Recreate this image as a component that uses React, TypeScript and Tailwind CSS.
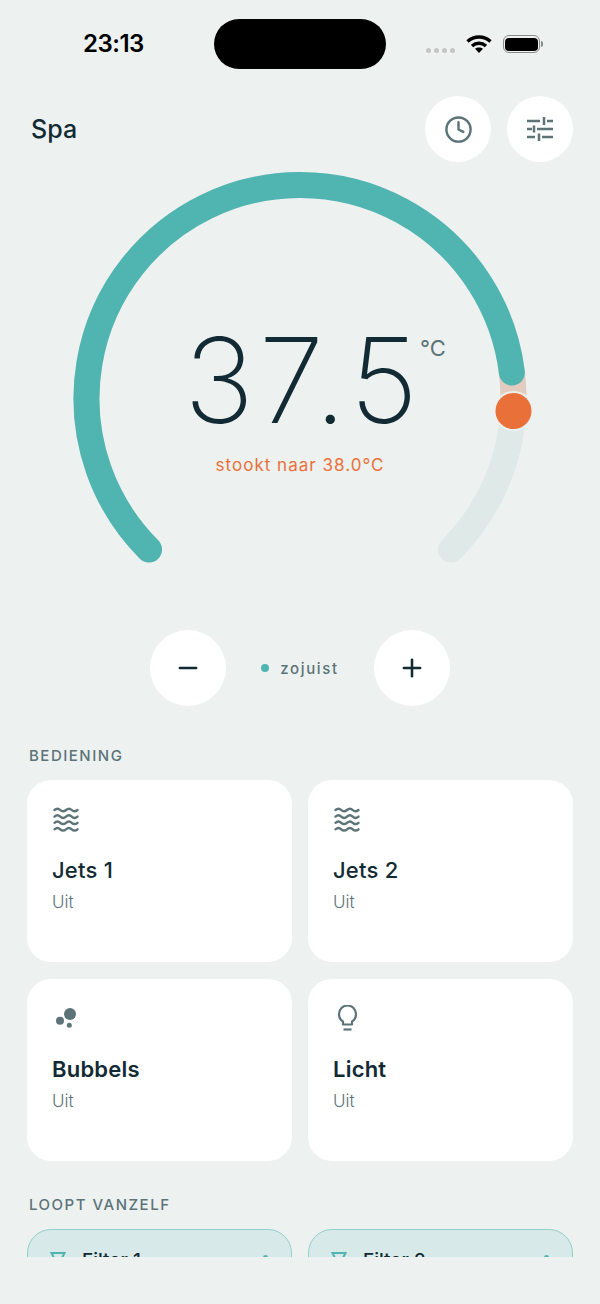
import { Clock, Minus, Plus } from 'lucide-react';

const CX = 300;
const CY = 398.5;
const R = 213.5;

// angles in degrees, clockwise from the top of the dial
const point = (deg: number) => {
  const rad = (deg * Math.PI) / 180;
  return { x: CX + R * Math.sin(rad), y: CY - R * Math.cos(rad) };
};

const arc = (from: number, to: number) => {
  const a = point(from);
  const b = point(to);
  const large = to - from > 180 ? 1 : 0;
  return `M ${a.x} ${a.y} A ${R} ${R} 0 ${large} 1 ${b.x} ${b.y}`;
};

function Gauge() {
  return (
    <div className="relative h-[440px] w-[600px]">
      <svg width="600" height="440" viewBox="0 170 600 440" className="block">
        <path d={arc(-135, 135)} fill="none" stroke="#dfe9e7" strokeWidth="26" strokeLinecap="round" />
        <path d={arc(82, 93)} fill="none" stroke="#e2ccbf" strokeWidth="26" />
        <path d={arc(-135, 83)} fill="none" stroke="#50b4b0" strokeWidth="26" strokeLinecap="round" />
        <circle cx="513.5" cy="411" r="20" fill="#edf1f0" />
        <circle cx="513.5" cy="411" r="18" fill="#ea7039" />
      </svg>
      <div className="absolute left-[184px] top-[135px] text-[118px] leading-[150px] font-[250] tracking-[0.04em] text-[#122a33]">
        37.5
      </div>
      <div className="absolute left-[420px] top-[164px] text-[22px] leading-[28px] text-[#5c7378]">°C</div>
      <div className="absolute inset-x-0 top-[283px] text-center text-[17px] leading-6 tracking-[0.06em] text-[#ea7039]">
        stookt naar 38.0°C
      </div>
    </div>
  );
}

function SlidersIcon() {
  return (
    <svg width="28" height="28" viewBox="0 0 28 28" fill="none" stroke="#5c7378" strokeWidth="2.5">
      <path d="M1 6h13M21 6h6M18 2v8" />
      <path d="M1 14h5M11 14h16M8 10.5v7" />
      <path d="M1 22h8M16 22h11M13 18.5v7.5" />
    </svg>
  );
}

function WavesIcon() {
  return (
    <svg width="28" height="28" viewBox="0 0 28 28" fill="none" stroke="#5c7378" strokeWidth="2.4" strokeLinecap="round">
      <path d="M2.5 4q3-2.6 5.75 0t5.75 0t5.75 0t5.75 0" />
      <path d="M2.5 10.6q3-2.6 5.75 0t5.75 0t5.75 0t5.75 0" />
      <path d="M2.5 16.8q3-2.6 5.75 0t5.75 0t5.75 0t5.75 0" />
      <path d="M2.5 23.3q3-2.6 5.75 0t5.75 0t5.75 0t5.75 0" />
    </svg>
  );
}

function BubblesIcon() {
  return (
    <svg width="28" height="28" viewBox="0 0 28 28" fill="#5c7378">
      <circle cx="18" cy="9" r="6" />
      <circle cx="8" cy="15.7" r="4" />
      <circle cx="17.3" cy="20.3" r="2.5" />
    </svg>
  );
}

function BulbIcon() {
  return (
    <svg width="28" height="28" viewBox="0 0 28 28" fill="none" stroke="#5c7378" strokeWidth="2.2" className="ml-[1px]">
      <path d="M9 19.5V16.5C6.5 15 5 12 5 9A8.5 8.5 0 0 1 22 9C22 12 20.5 15 18 16.5V19.5Z" strokeLinejoin="round" />
      <path d="M9.5 24.5H17.5" />
    </svg>
  );
}

function Card({ name, icon, bold }: { name: string; icon: React.ReactNode; bold?: boolean }) {
  return (
    <div className="h-[182px] rounded-[24px] bg-white pl-[25px] pt-[26px]">
      <div className="h-[28px]">{icon}</div>
      <div className={`mt-[22px] text-[22px] leading-[28px] tracking-[0.01em] text-[#122a33] ${bold ? 'font-semibold' : 'font-medium'}`}>
        {name}
      </div>
      <div className="mt-[6px] text-[17px] leading-6 font-light text-[#5c7378]">Uit</div>
    </div>
  );
}

function FilterCard({ name }: { name: string }) {
  return (
    <div className="relative h-[90px] rounded-[24px] border-[1.5px] border-[#94d0cb] bg-[#d7e9e9]">
      <svg width="16" height="16" viewBox="0 0 16 16" className="absolute left-[22px] top-[21px]" fill="none" stroke="#50b4b0" strokeWidth="2">
        <path d="M1.5 2h13L8 15z" />
      </svg>
      <span className="absolute left-[54px] top-[19px] text-[19px] leading-6 font-medium text-[#122a33]">{name}</span>
      <span className="absolute right-[23px] top-[25px] h-[5px] w-[5px] rounded-full bg-[#50b4b0]" />
    </div>
  );
}

export default function App() {
  return (
    <div className="h-[1304px] w-[600px] bg-[#edf1f0] font-['Inter',sans-serif]">
      <div className="h-[1257px] overflow-hidden">
        {/* status bar */}
        <div className="relative flex h-[88px] items-start">
          <div className="ml-[83px] mt-[29px] text-[24px] leading-[30px] font-semibold tracking-[-0.02em] text-black">23:13</div>
          <div className="absolute left-[214px] top-[19px] h-[50px] w-[172px] rounded-[25px] bg-black" />
          <div className="absolute left-[426px] top-[48px] flex gap-[3px]">
            <span className="h-[5px] w-[5px] rounded-full bg-[#c4c6c6]" />
            <span className="h-[5px] w-[5px] rounded-full bg-[#c4c6c6]" />
            <span className="h-[5px] w-[5px] rounded-full bg-[#c4c6c6]" />
            <span className="h-[5px] w-[5px] rounded-full bg-[#c4c6c6]" />
          </div>
          <svg width="26" height="20" viewBox="0 0 26 20" className="absolute left-[466px] top-[34px]" fill="none" stroke="#000" strokeWidth="3.4">
            <path d="M1.5 7.5C8 1.5 18 1.5 24.5 7.5" />
            <path d="M6 12c4-3.6 10-3.6 14 0" />
            <path d="M13 19l-4-4.2c2.2-1.8 5.8-1.8 8 0z" fill="#000" stroke="none" />
          </svg>
          <div className="absolute left-[503px] top-[35px] flex h-[18px] w-[37px] items-center justify-center rounded-[6px] border border-[#8a8a8a]">
            <span className="h-[13px] w-[33px] rounded-[4px] bg-black" />
          </div>
          <span className="absolute left-[541px] top-[41px] h-[6px] w-[2px] rounded-r-sm bg-[#8a8a8a]" />
        </div>

        {/* header */}
        <div className="flex h-[82px] items-center justify-between pl-[31px] pr-[27px]">
          <div className="text-[25px] leading-8 font-medium tracking-[0.005em] text-[#122a33]">Spa</div>
          <div className="flex gap-4">
            <button className="flex h-[66px] w-[66px] items-center justify-center rounded-full bg-white text-[#5c7378]">
              <Clock size={29} strokeWidth={2} />
            </button>
            <button className="flex h-[66px] w-[66px] items-center justify-center rounded-full bg-white">
              <SlidersIcon />
            </button>
          </div>
        </div>

        <Gauge />

        {/* stepper */}
        <div className="mt-[20px] flex items-center justify-center">
          <button className="flex h-[76px] w-[76px] items-center justify-center rounded-full bg-white text-[#122a33]">
            <Minus size={28} strokeWidth={2.2} />
          </button>
          <div className="flex w-[148px] items-center justify-center gap-[11px]">
            <span className="h-[8px] w-[8px] rounded-full bg-[#50b4b0]" />
            <span className="mt-[1px] text-[15px] leading-5 font-medium tracking-[0.11em] text-[#5c7378]">zojuist</span>
          </div>
          <button className="flex h-[76px] w-[76px] items-center justify-center rounded-full bg-white text-[#122a33]">
            <Plus size={28} strokeWidth={2.2} />
          </button>
        </div>

        {/* controls */}
        <div className="mt-[40px] px-[27px]">
          <div className="pl-[2px] text-[15px] leading-5 font-medium tracking-[0.1em] text-[#5c7378]">BEDIENING</div>
          <div className="mt-[14px] grid grid-cols-2 gap-x-[16px] gap-y-[17px]">
            <Card name="Jets 1" icon={<WavesIcon />} />
            <Card name="Jets 2" icon={<WavesIcon />} />
            <Card name="Bubbels" bold icon={<BubblesIcon />} />
            <Card name="Licht" bold icon={<BulbIcon />} />
          </div>
          <div className="mt-[34px] pl-[2px] text-[15px] leading-5 font-medium tracking-[0.1em] text-[#5c7378]">LOOPT VANZELF</div>
          <div className="mt-[14px] grid grid-cols-2 gap-x-[16px]">
            <FilterCard name="Filter 1" />
            <FilterCard name="Filter 2" />
          </div>
        </div>
      </div>
    </div>
  );
}
